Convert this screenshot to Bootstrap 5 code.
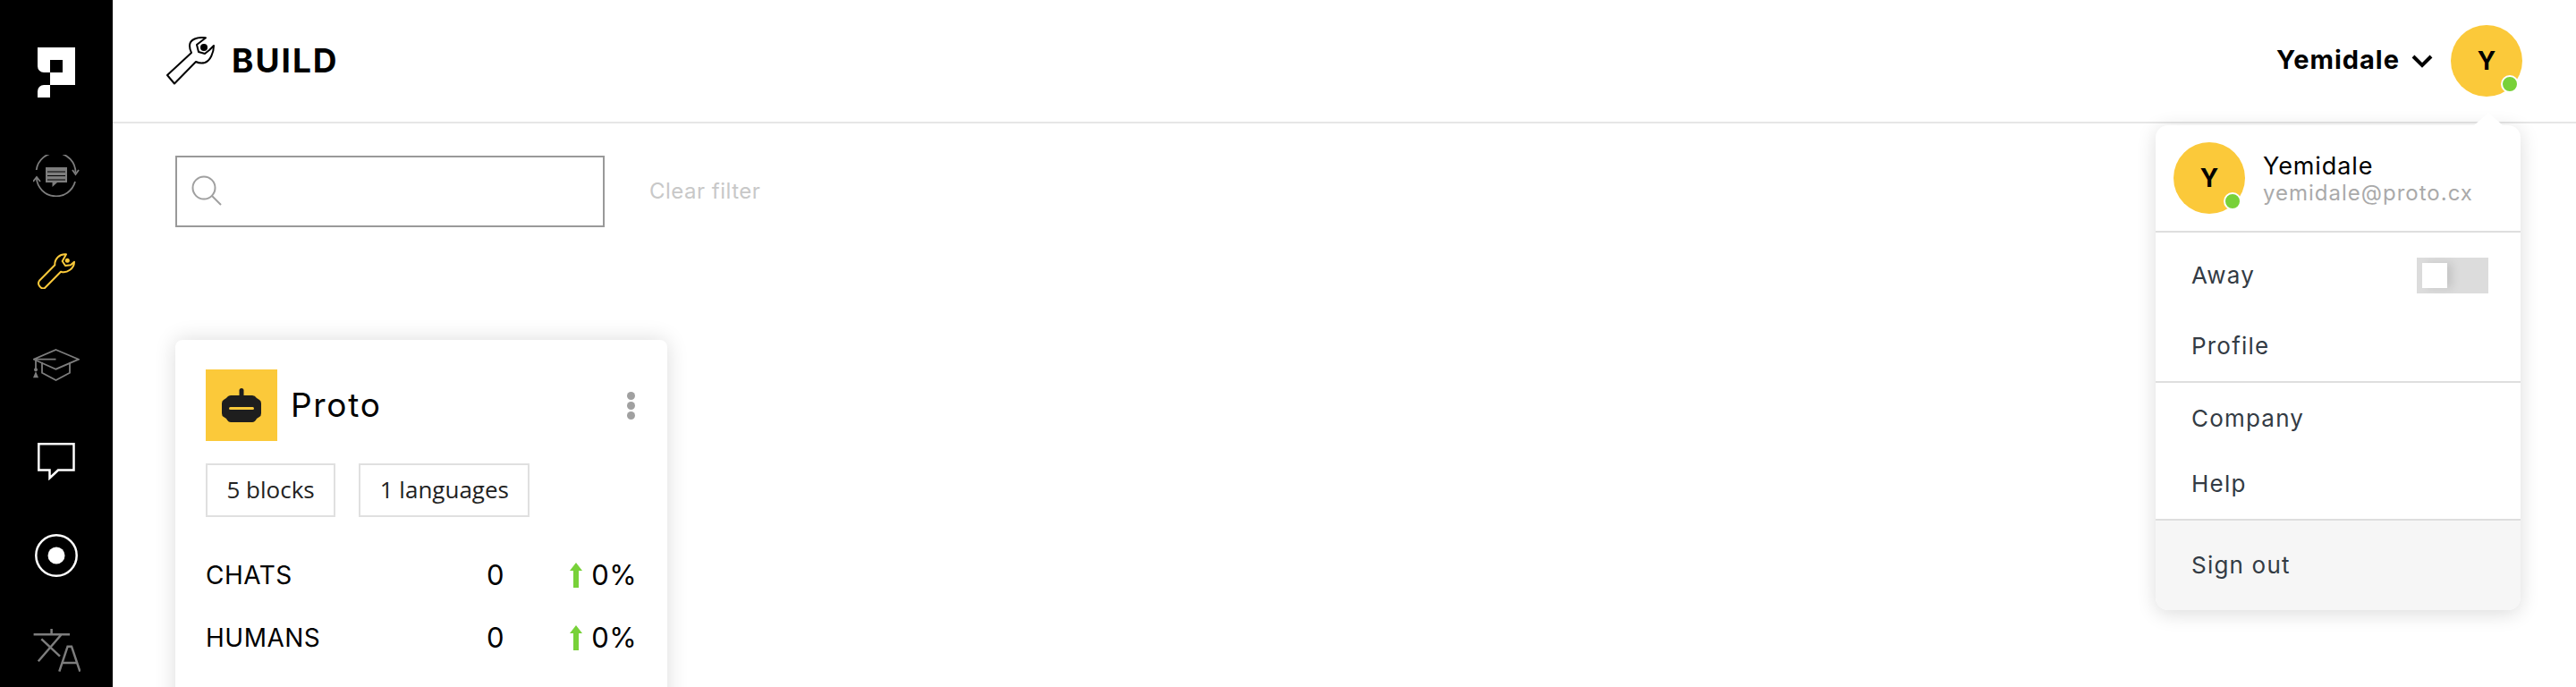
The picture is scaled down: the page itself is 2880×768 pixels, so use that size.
<!doctype html>
<html lang="en">
<head>
<meta charset="utf-8">
<title>Build</title>
<link rel="stylesheet" href="https://cdn.jsdelivr.net/npm/bootstrap@5.3.0/dist/css/bootstrap.min.css">
<style>
html,body{height:100%;overflow:hidden}
body{font-family:"Inter","Liberation Sans",sans-serif;color:#000;background:#fff}
.rail{width:126px;background:#000;height:768px;flex:none;padding-top:53px}
.rail-stack{display:flex;flex-direction:column;align-items:center}
.rail-stack svg{display:block}
.g-a{margin-top:64px}.g-b{margin-top:63px}.g-c{margin-top:67px}.g-d{margin-top:69px}.g-e{margin-top:60px}.g-f{margin-top:58px}
.topbar{height:138px;border-bottom:2px solid #e6e6e6;padding-left:60px;padding-right:60px}
.page-title{font-size:37px;font-weight:700;margin:0 0 2px 19px;letter-spacing:2px;line-height:1}
.user-name{font-size:29px;font-weight:700;letter-spacing:1px;margin-bottom:2px}
.chev{margin-left:13px;margin-right:20px}
.ava{width:80px;height:80px;border-radius:50%;background:#fbc93a;font-size:28px;font-weight:700;flex:none}
.ava-dot{position:absolute;width:20px;height:20px;border-radius:50%;background:#78d139;border:2px solid #fff;right:4px;bottom:4px}
.searcher{width:480px;height:80px;border:2px solid #999;padding-left:16px}
.clear-link{font-size:24px;color:#c8c8c8;margin-left:50px;letter-spacing:.5px}
.filter-row{padding:36px 0 0 70px}
.bot-card{width:550px;height:420px;background:#fff;border-radius:8px;box-shadow:0 0 24px rgba(0,0,0,.14);margin:126px 0 0 70px;padding:33px 34px}
.bot-logo{width:80px;height:80px;background:#fbc93a;flex:none}
.bot-name{font-size:37px;margin-left:15px;letter-spacing:1.7px}
.more-dots{gap:2px;margin-right:2px}
.more-dots i{display:block;width:9px;height:9px;border-radius:50%;background:#a0a0a0}
.chip{font-family:"Open Sans",sans-serif;font-size:26px;height:60px;border:2px solid #e0e0e0;color:#222;padding:0 21.5px;line-height:54px}
.chip-row{gap:26px;margin-top:25px}
.stat-row{font-size:28px;height:70px;letter-spacing:.5px}
.stat-list{margin-top:30px}
.stat-label{width:270px}
.stat-val{width:64px;text-align:right;font-size:31px}
.stat-pct{margin-left:auto;font-size:31px;gap:10px;letter-spacing:.4px}
.menu-tip{position:absolute;left:2765px;top:126px;width:0;height:0;border-left:17px solid transparent;border-right:17px solid transparent;border-bottom:15px solid #fff;z-index:3}
.user-menu{position:absolute;left:2410px;top:140px;width:408px;height:542px;background:#fff;border-radius:14px;box-shadow:0 4px 22px rgba(0,0,0,.14);z-index:2;overflow:hidden}
.menu-head{height:120px;border-bottom:2px solid #dedede;padding:18px 20px}
.menu-who{margin-left:20px;padding-top:2px}
.menu-name{font-size:27px;line-height:32px;letter-spacing:.9px}
.menu-mail{font-size:24px;line-height:28px;color:#aaa;letter-spacing:1px}
.menu-group{border-bottom:2px solid #dedede}
.menu-row{font-size:26px;color:#333b44;padding:0 36px 0 40px;letter-spacing:1.2px}
.h-a{height:96px}.h-a>span:first-child{margin-bottom:2px}.h-b{height:70px;padding-bottom:10px}.h-c{height:78px}.h-d{height:74px;padding-bottom:6px}
.menu-foot{background:#f6f6f6;height:100px;font-size:26px;color:#333b44;padding:0 40px 2px;letter-spacing:1.2px}
.toggler{width:80px;height:40px;background:#dcdcdc;padding:6px}
.toggler b{display:block;width:28px;height:28px;background:#fff;box-shadow:6px 0 10px rgba(0,0,0,.1)}
</style>
</head>
<body>
<div class="d-flex">
  <nav class="rail rail-stack">
    <svg width="42" height="56" viewBox="0 0 42 56"><path fill="#fff" d="M0 0H42V42H14V28H28V14H14V28H7A7 7 0 0 1 0 21Z"/><path fill="#fff" d="M14 42V56H0V49A7 7 0 0 1 7 42Z"/></svg>
    <svg class="g-a" width="52" height="47" viewBox="0 0 52 47" fill="none" stroke="#7d7d7d" stroke-width="1.800"><path d="M3.700 17A22 22 0 0 1 47.500 20"/><path d="M44 17L47.500 22L51 17"/><path d="M47 30A22 22 0 0 1 3.800 26"/><path d="M0 30L4 25L8 30"/><path fill="#7d7d7d" stroke="none" d="M14 14H38V31H27L21.500 36V31H14Z"/><path stroke="#000" stroke-width="1.200" d="M16 19H36M16 23.500H36M16 28H36"/></svg>
    <svg class="g-b" width="42" height="40" viewBox="0 0 42 40" fill="none" stroke="#fbc93a" stroke-width="2"><path stroke-linejoin="round" d="M32 1.300C25 .5 19 6 19.300 13.300L2 30.700C-1 35 4 41 8 39L26 20.700C33 23 41 17 41 9.700L37 13.300L31 14L27.700 9Z"/><circle cx="33.300" cy="8.300" r="2.500" fill="#fbc93a" stroke="none"/></svg>
    <svg class="g-c" width="52" height="36" viewBox="0 0 52 36" fill="none" stroke="#7d7d7d" stroke-width="1.800"><path d="M25.500 1L51 11.700L25.500 22.700L.7 11.700Z"/><path d="M10 15V26.700L25.500 35L41 26.700V15"/><path d="M3 11.700H25.500M3 11.700V22"/><circle cx="3" cy="23.300" r="2" fill="#7d7d7d" stroke="none"/><path fill="#7d7d7d" stroke="none" d="M3 25L0 32.300H6Z"/></svg>
    <svg class="g-d" width="42" height="42" viewBox="0 0 42 42" fill="none" stroke="#fff" stroke-width="2.500"><path d="M1.300 1.300H40.500V30.500H23L13.500 39.500V30.500H1.300Z"/></svg>
    <svg class="g-e" width="48" height="48" viewBox="0 0 48 48"><circle cx="24" cy="24" r="22.700" fill="none" stroke="#fff" stroke-width="2.500"/><circle cx="24" cy="24" r="9.500" fill="#fff"/></svg>
    <svg class="g-f" width="53" height="48" viewBox="0 0 53 48" fill="none" stroke="#7d7d7d" stroke-width="2.500"><path d="M.6 6.300H41M20.600 0V6.300M31.700 6.300L5.800 36.300M9.300 11.300L30 30.700M29.300 47.600L38.600 19.700H43L52.400 47.600M31.700 38H50"/></svg>
  </nav>
  <main class="flex-grow-1">
    <header class="topbar d-flex align-items-center">
      <svg width="54" height="54" viewBox="0 0 54 54" fill="none" stroke="#000" stroke-width="2"><path stroke-linejoin="round" d="M44 1.300C35 0 26 3 26 10C26 13 27 16 28 18L1 43L9 52.500L33 28C37 30 39 30 43 29C49 27 53 18 53 10L48 15L43 19L36 17L34 9Z"/><circle cx="42" cy="12" r="4" fill="#000" stroke="none"/></svg>
      <h1 class="page-title">BUILD</h1>
      <div class="ms-auto d-flex align-items-center">
        <span class="user-name">Yemidale</span>
        <svg class="chev" width="24" height="16" viewBox="0 0 24 16" fill="none" stroke="#000" stroke-width="4"><path d="M2 3L12 13L22 3"/></svg>
        <div class="ava position-relative d-flex align-items-center justify-content-center">Y<span class="ava-dot"></span></div>
      </div>
    </header>
    <div class="filter-row d-flex align-items-center">
      <div class="searcher d-flex align-items-center"><svg width="34" height="36" viewBox="0 0 34 36" fill="none" stroke="#a0a0a0" stroke-width="2"><circle cx="14" cy="14" r="12.500"/><path d="M23 23L33 33"/></svg></div>
      <span class="clear-link">Clear filter</span>
    </div>
    <section class="bot-card">
      <div class="d-flex align-items-center">
        <div class="bot-logo d-flex align-items-center justify-content-center"><svg width="44" height="38" viewBox="0 0 44 38"><rect x="19.500" y="0" width="5" height="10" rx="2.500" fill="#1e1e1e"/><path fill="#1e1e1e" d="M10 8H34Q37 8 39 11L42 13Q44 14 44 17V28Q44 31 42 32L39 34Q37 38 34 38H10Q7 38 5 34L2 32Q0 31 0 28V17Q0 14 2 13L5 11Q7 8 10 8Z"/><rect x="8" y="21" width="28" height="3" rx="1.500" fill="#fbc93a"/></svg></div>
        <span class="bot-name">Proto</span>
        <div class="more-dots ms-auto d-flex flex-column"><i></i><i></i><i></i></div>
      </div>
      <div class="chip-row d-flex"><span class="chip">5 blocks</span><span class="chip">1 languages</span></div>
      <div class="stat-list">
        <div class="stat-row d-flex align-items-center"><span class="stat-label">CHATS</span><span class="stat-val">0</span><span class="stat-pct d-flex align-items-center"><svg width="14" height="28" viewBox="0 0 14 28"><path fill="#78d139" d="M7 0L14 9H10V28H4V9H0Z"/></svg>0%</span></div>
        <div class="stat-row d-flex align-items-center"><span class="stat-label">HUMANS</span><span class="stat-val">0</span><span class="stat-pct d-flex align-items-center"><svg width="14" height="28" viewBox="0 0 14 28"><path fill="#78d139" d="M7 0L14 9H10V28H4V9H0Z"/></svg>0%</span></div>
      </div>
    </section>
  </main>
</div>
<div class="menu-tip"></div>
<aside class="user-menu">
  <div class="menu-head d-flex align-items-center">
    <div class="ava position-relative d-flex align-items-center justify-content-center">Y<span class="ava-dot"></span></div>
    <div class="menu-who"><div class="menu-name">Yemidale</div><div class="menu-mail">yemidale@proto.cx</div></div>
  </div>
  <div class="menu-group">
    <div class="menu-row h-a d-flex align-items-center justify-content-between"><span>Away</span><span class="toggler"><b></b></span></div>
    <div class="menu-row h-b d-flex align-items-center">Profile</div>
  </div>
  <div class="menu-group">
    <div class="menu-row h-c d-flex align-items-center">Company</div>
    <div class="menu-row h-d d-flex align-items-center">Help</div>
  </div>
  <div class="menu-foot d-flex align-items-center">Sign out</div>
</aside>
<script src="https://cdn.jsdelivr.net/npm/bootstrap@5.3.0/dist/js/bootstrap.bundle.min.js"></script>
</body>
</html>
